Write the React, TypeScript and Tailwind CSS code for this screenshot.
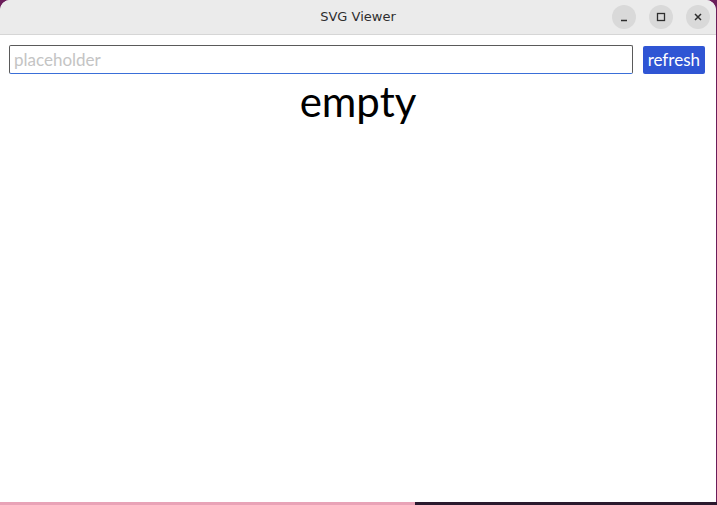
import React from 'react';

const WindowButton: React.FC<{ children: React.ReactNode }> = ({ children }) => (
  <div className="w-6 h-6 rounded-full bg-[#d9d9d9] flex items-center justify-center text-[#2e2e2e]">
    {children}
  </div>
);

export default function App() {
  return (
    <div className="w-[717px] h-[505px] bg-[#6b1d5a] overflow-hidden flex flex-col">
      <div className="flex-1 flex flex-col bg-white rounded-t-[10px] mr-px overflow-hidden">
        {/* Title bar */}
        <div className="h-[35px] bg-[#ebebeb] border-b border-[#d6d6d6] flex items-center relative">
          <div className="flex-1 text-center text-[13px] text-[#2e2e2e] font-['DejaVu_Sans',sans-serif]">SVG Viewer</div>
          <div className="absolute right-[6px] top-[5px] flex gap-[13px]">
            <WindowButton>
              <svg width="10" height="10" viewBox="0 0 10 10"><path d="M2 8.5h6" stroke="currentColor" strokeWidth="1.3" /></svg>
            </WindowButton>
            <WindowButton>
              <svg width="10" height="10" viewBox="0 0 10 10"><rect x="1.5" y="1.5" width="7" height="7" fill="none" stroke="currentColor" strokeWidth="1.3" /></svg>
            </WindowButton>
            <WindowButton>
              <svg width="10" height="10" viewBox="0 0 10 10"><path d="M2 2l6 6M8 2l-6 6" stroke="currentColor" strokeWidth="1.5" /></svg>
            </WindowButton>
          </div>
        </div>

        {/* Content */}
        <div className="flex-1 flex flex-col font-['Lato',sans-serif]">
          <div className="flex items-center gap-[10px] pl-[9px] pr-[11px] pt-[10px]">
            <input
              placeholder="placeholder"
              className="flex-1 h-[29px] border border-[#5a5a5a] border-b-[#3a6fd8] rounded-[2px] px-[4px] text-[17px] text-black placeholder:text-[#c4c4c4] outline-none"
            />
            <button className="h-[28px] px-[5px] bg-[#2f55d4] text-white text-[17px] rounded-[2px]">refresh</button>
          </div>
          <div className="text-center text-[42px] leading-none text-black mt-[6px]">empty</div>
        </div>
      </div>
      <div className="h-[3px] flex">
        <div className="w-[415px] bg-[#e9a3b7]" />
        <div className="flex-1 bg-[#2a1a2e]" />
      </div>
    </div>
  );
}
